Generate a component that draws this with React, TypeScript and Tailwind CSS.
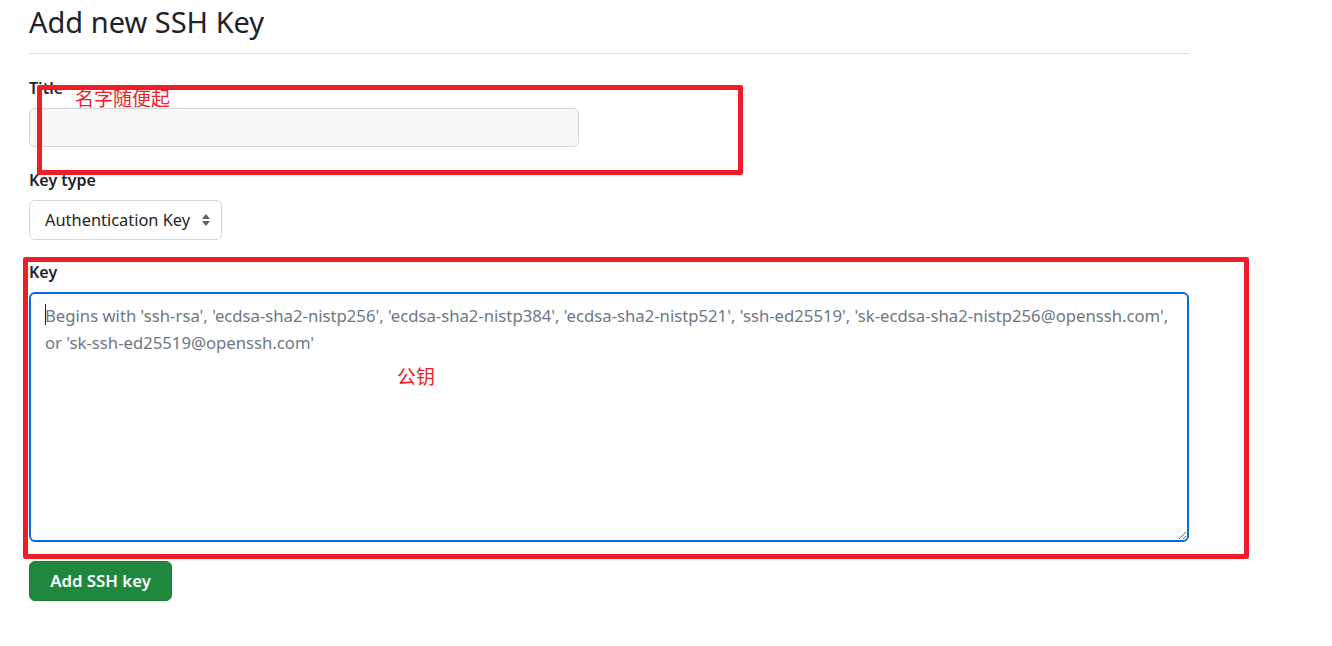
import React from "react";

export default function App() {
  const placeholder =
    "Begins with 'ssh-rsa', 'ecdsa-sha2-nistp256', 'ecdsa-sha2-nistp384', 'ecdsa-sha2-nistp521', 'ssh-ed25519', 'sk-ecdsa-sha2-nistp256@openssh.com',\nor 'sk-ssh-ed25519@openssh.com'";
  return (
    <div
      className="relative w-[1332px] h-[646px] bg-white text-[#1f2328] overflow-hidden"
      style={{ fontFamily: '"Noto Sans", "Noto Sans CJK SC", sans-serif' }}
    >
      <div className="pl-[29px] w-[1189px]">
        <h2 className="text-[29px] leading-[42px] pt-[1px] font-normal">Add new SSH Key</h2>
        <div className="mt-[10px] h-px bg-[#d8dee4]" />
        <div className="pt-[24px] flex flex-col">
          <label className="text-[16px] font-semibold leading-[20px]">Title</label>
          <input className="mt-[10px] w-[550px] h-[39px] rounded-[6px] border border-[#d0d7de] bg-[#f6f8fa] outline-none" />
          <label className="mt-[23px] text-[16px] font-semibold leading-[20px]">Key type</label>
          <div className="mt-[10px] w-[193px] h-[40px] rounded-[6px] border border-[#d0d7de] bg-white flex items-center pl-[15px] pr-[10px] justify-between">
            <span className="text-[16.4px]">Authentication Key</span>
            <svg width="10" height="16" viewBox="0 0 10 16">
              <path d="M5 2 L9 7 H1 Z" fill="#59636e" />
              <path d="M5 14 L9 9 H1 Z" fill="#59636e" />
            </svg>
          </div>
          <label className="mt-[22px] text-[16px] font-semibold leading-[20px]">Key</label>
          <div className="relative mt-[10px]">
            <textarea
              className="block w-[1160px] h-[250px] rounded-[6px] border-2 border-[#0969da] bg-white px-[14px] pt-[8px] pb-[10px] text-[16.7px] leading-[27px] outline-none placeholder:text-[#6e7781] resize"
              placeholder={placeholder}
            />
            <div className="absolute left-[16px] top-[12px] w-px h-[21px] bg-[#1f2328]" />
          </div>
          <button className="mt-[19px] w-[143px] h-[40px] rounded-[6px] bg-[#1f883d] text-white text-[16.8px] font-semibold border border-[#1b7f37]">
            Add SSH key
          </button>
        </div>
      </div>

      {/* annotations */}
      <div className="absolute left-[37px] top-[85px] w-[706px] h-[90px] border-[5px] border-[#ee1d27] rounded-[2px] pointer-events-none" />
      <div className="absolute left-[75px] top-[86px] text-[19px] text-[#ee1d27] leading-[26px]">名字随便起</div>
      <div className="absolute left-[23px] top-[257px] w-[1226px] h-[302px] border-[5px] border-[#ee1d27] rounded-[2px] pointer-events-none" />
      <div className="absolute left-[397px] top-[364px] text-[19px] text-[#ee1d27] leading-[26px]">公钥</div>
    </div>
  );
}
